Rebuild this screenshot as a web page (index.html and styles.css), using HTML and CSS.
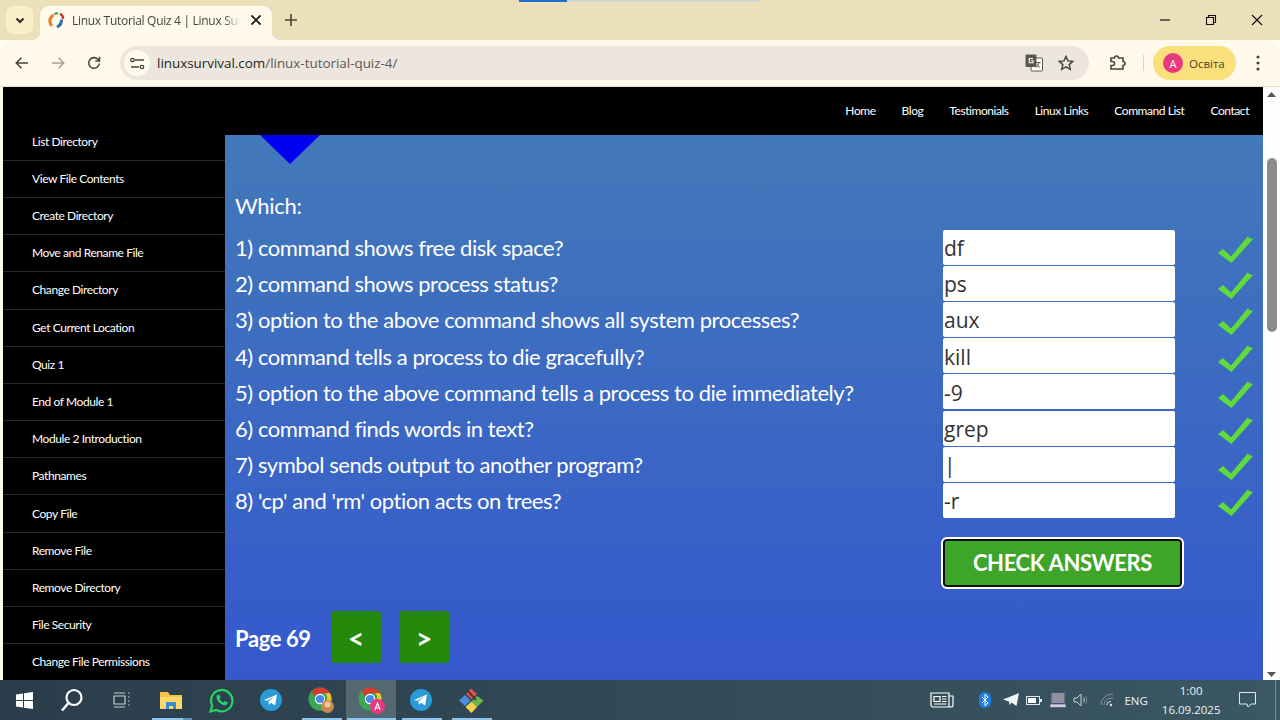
FILE: index.html
```html
<!DOCTYPE html>
<html lang="en">
<head>
<meta charset="utf-8">
<title>Linux Tutorial Quiz 4 | Linux Survival</title>
<link rel="stylesheet" href="styles.css">
</head>
<body>
<div class="tabstrip">
  <div class="load-bar"></div>
  <button class="tab-search"><svg width="12" height="12" viewBox="0 0 12 12"><path d="M2.500 4.500 6 8l3.500-3.500" fill="none" stroke="#2b2a20" stroke-width="2"/></svg></button>
  <div class="tab">
    <svg class="favicon" width="17" height="17" viewBox="0 0 17 17"><path d="M5.500 3C2 5 .5 9 3.500 14" fill="none" stroke="#e8792a" stroke-width="3"/><path d="M6.500 2.500C7.500 1.500 9 1.300 10 1.500" fill="none" stroke="#3aa655" stroke-width="2.400"/><path d="M12 1.800c2 1 3 3 3.200 5" fill="none" stroke="#c4342c" stroke-width="2.400"/><path d="M13.500 7.500c.2 3-1.500 6-4.500 7.500" fill="none" stroke="#2f6fb5" stroke-width="3"/></svg>
    <span class="tab-title">Linux Tutorial Quiz 4 | Linux Survival</span>
    <svg class="tab-close" width="12" height="12" viewBox="0 0 12 12"><path d="M1.500 1.500l9 9m0-9l-9 9" stroke="#222" stroke-width="1.800"/></svg>
  </div>
  <svg class="new-tab" width="14" height="14" viewBox="0 0 14 14"><path d="M7 1v12M1 7h12" stroke="#4a4636" stroke-width="1.600"/></svg>
  <div class="win-controls">
    <svg width="12" height="12" viewBox="0 0 12 12"><path d="M1 6h10" stroke="#111" stroke-width="1.200"/></svg>
    <svg width="12" height="12" viewBox="0 0 12 12"><path d="M1.500 3.500h7v7h-7zM3.500 3.500v-2h7v7h-2" fill="none" stroke="#111" stroke-width="1.100"/></svg>
    <svg width="12" height="12" viewBox="0 0 12 12"><path d="M1 1l10 10m0-10L1 11" stroke="#111" stroke-width="1.200"/></svg>
  </div>
</div>
<div class="toolbar">
  <svg class="nav-icon" width="16" height="16" viewBox="0 0 16 16"><path d="M14 8H2.500M7.500 2.800 2.300 8l5.200 5.200" fill="none" stroke="#4a4636" stroke-width="1.600"/></svg>
  <svg class="nav-icon" width="16" height="16" viewBox="0 0 16 16"><path d="M2 8h11.500M8.500 2.800 13.700 8l-5.200 5.200" fill="none" stroke="#a9a493" stroke-width="1.600"/></svg>
  <svg class="nav-icon" width="16" height="16" viewBox="0 0 16 16"><path d="M13.300 8.500a5.300 5.300 0 1 1-1.500-4.300l1.500 1.500M13.500 1.800v4.200H9.300" fill="none" stroke="#4a4636" stroke-width="1.600"/></svg>
  <div class="omnibox">
    <span class="site-btn"><svg width="15" height="13" viewBox="0 0 15 13"><path d="M5 3h9M1 10h8" stroke="#4a4636" stroke-width="1.400"/><circle cx="2.500" cy="3" r="1.700" fill="none" stroke="#4a4636" stroke-width="1.300"/><circle cx="12" cy="10" r="1.700" fill="none" stroke="#4a4636" stroke-width="1.300"/></svg></span>
    <span class="url"><span class="url-host">linuxsurvival.com</span>/linux-tutorial-quiz-4/</span>
    <svg class="translate" width="18" height="18" viewBox="0 0 18 18"><rect x="6" y="4" width="11.500" height="13" rx="1" fill="#fff" stroke="#5c5848"/><rect x="0.500" y="0.500" width="11" height="12.500" rx="1" fill="#5c5848"/><path d="M8 4.500H4.300v4.300H8V6.700H6" fill="none" stroke="#fff" stroke-width="1.100"/><path d="M11 8.500h4.500M14 8.500c-.3 2-1.300 4-3 5M12 10.500c.6 1.300 1.600 2.400 3 3" fill="none" stroke="#5c5848"/></svg>
    <svg class="star" width="16" height="16" viewBox="0 0 16 16"><path d="M8 1.500l2 4.400 4.800.5-3.600 3.200 1 4.700L8 11.900l-4.200 2.400 1-4.700L1.200 6.400 6 5.900z" fill="none" stroke="#4a4636" stroke-width="1.500"/></svg>
  </div>
  <svg class="ext" width="18" height="18" viewBox="0 0 18 18"><path d="M2 5h3.500a2 2 0 0 1 4 0H14v3.500a2 2 0 0 1 0 4V16H2v-3.500h1.500a2 2 0 0 0 0-4H2z" transform="translate(0 -1)" fill="none" stroke="#4a4636" stroke-width="1.600"/></svg>
  <span class="sep"></span>
  <div class="profile"><span class="avatar">A</span><span>Освіта</span></div>
  <svg class="menu" width="4" height="16" viewBox="0 0 4 16"><circle cx="2" cy="2" r="1.600" fill="#4a4636"/><circle cx="2" cy="8" r="1.600" fill="#4a4636"/><circle cx="2" cy="14" r="1.600" fill="#4a4636"/></svg>
</div>
<div class="viewport">
  <div class="page">
    <header class="site-header">
      <nav class="site-nav">
        <a>Home</a><a>Blog</a><a>Testimonials</a><a>Linux Links</a><a>Command List</a><a>Contact</a>
      </nav>
    </header>
    <div class="page-body">
      <aside class="sidebar">
        <a>List Directory</a><a>View File Contents</a><a>Create Directory</a><a>Move and Rename File</a><a>Change Directory</a><a>Get Current Location</a><a>Quiz 1</a><a>End of Module 1</a><a>Module 2 Introduction</a><a>Pathnames</a><a>Copy File</a><a>Remove File</a><a>Remove Directory</a><a>File Security</a><a>Change File Permissions</a>
      </aside>
      <main class="content">
        <div class="triangle"></div>
        <p class="which">Which:</p>
        <div class="quiz">
          <div class="q-text">1) command shows free disk space?</div><input class="q-input" value="df" readonly><svg class="check" viewBox="0 0 35 28"><path d="M0 18l5-4 8 7.500L30 1l1 2 4 1-21.500 24z" fill="#5fdc3a"/></svg>
          <div class="q-text">2) command shows process status?</div><input class="q-input" value="ps" readonly><svg class="check" viewBox="0 0 35 28"><path d="M0 18l5-4 8 7.500L30 1l1 2 4 1-21.500 24z" fill="#5fdc3a"/></svg>
          <div class="q-text">3) option to the above command shows all system processes?</div><input class="q-input" value="aux" readonly><svg class="check" viewBox="0 0 35 28"><path d="M0 18l5-4 8 7.500L30 1l1 2 4 1-21.500 24z" fill="#5fdc3a"/></svg>
          <div class="q-text">4) command tells a process to die gracefully?</div><input class="q-input" value="kill" readonly><svg class="check" viewBox="0 0 35 28"><path d="M0 18l5-4 8 7.500L30 1l1 2 4 1-21.500 24z" fill="#5fdc3a"/></svg>
          <div class="q-text">5) option to the above command tells a process to die immediately?</div><input class="q-input" value="-9" readonly><svg class="check" viewBox="0 0 35 28"><path d="M0 18l5-4 8 7.500L30 1l1 2 4 1-21.500 24z" fill="#5fdc3a"/></svg>
          <div class="q-text">6) command finds words in text?</div><input class="q-input" value="grep" readonly><svg class="check" viewBox="0 0 35 28"><path d="M0 18l5-4 8 7.500L30 1l1 2 4 1-21.500 24z" fill="#5fdc3a"/></svg>
          <div class="q-text">7) symbol sends output to another program?</div><input class="q-input" value="|" readonly><svg class="check" viewBox="0 0 35 28"><path d="M0 18l5-4 8 7.500L30 1l1 2 4 1-21.500 24z" fill="#5fdc3a"/></svg>
          <div class="q-text">8) 'cp' and 'rm' option acts on trees?</div><input class="q-input" value="-r" readonly><svg class="check" viewBox="0 0 35 28"><path d="M0 18l5-4 8 7.500L30 1l1 2 4 1-21.500 24z" fill="#5fdc3a"/></svg>
        </div>
        <div class="actions"><button class="check-btn">CHECK ANSWERS</button></div>
        <div class="pager">
          <span class="page-label">Page 69</span>
          <button class="page-btn">&lt;</button>
          <button class="page-btn">&gt;</button>
        </div>
      </main>
    </div>
  </div>
  <div class="scrollbar">
    <svg width="9" height="5" viewBox="0 0 9 5"><path d="M0 5l4.500-5L9 5z" fill="#555"/></svg>
    <div class="thumb-track"><div class="thumb"></div></div>
    <svg width="9" height="5" viewBox="0 0 9 5"><path d="M0 0l4.500 5L9 0z" fill="#555"/></svg>
  </div>
</div>
<footer class="taskbar">
  <div class="tb-left">
    <span class="tb-btn tb-start"><svg width="17" height="17" viewBox="0 0 17 17"><path d="M0 2.500l7-1v6.600H0zM8 1.300 17 0v8.100H8zM0 9h7v6.600l-7-1zM8 9h9v8l-9-1.300z" fill="#fff"/></svg></span>
    <span class="tb-btn tb-search"><svg width="24" height="24" viewBox="0 0 24 24"><circle cx="14" cy="9.500" r="7.500" fill="none" stroke="#fff" stroke-width="2.200"/><path d="M8.500 15 2 22.500" stroke="#fff" stroke-width="2.600"/></svg></span>
    <span class="tb-btn tb-tasks"><svg width="17" height="16" viewBox="0 0 17 16"><path d="M1 1h11M1 15h11M1 4h11v8H1zM15 1h1.500M15 5h1.500M15 9h1.500M15 13h1.500" fill="none" stroke="#c8d0d4" stroke-width="1.200"/></svg></span>
    <span class="tb-btn tb-app running stacked"><svg width="22" height="20" viewBox="0 0 22 20"><path d="M0 2h8l2 3h12v14H0z" fill="#f5c342"/><path d="M0 7h22v12H0z" fill="#fbd968"/><path d="M6 12h10v7h-3v-3H9v3H6z" fill="#2e8fd6"/></svg></span>
    <span class="tb-btn tb-app"><svg width="25" height="25" viewBox="0 0 25 25"><path d="M1.500 23.500l1.700-6A10.700 10.700 0 1 1 7.500 22z" fill="none" stroke="#27d366" stroke-width="2.200"/><path d="M8.700 6.800c-1 1-1.500 2.200-1 3.700 1 3 3.500 5.500 6.700 6.600 1.600.5 2.900 0 3.800-1.200l.5-1.400-3-1.500-1.300 1.400c-1.700-.7-3-2-3.800-3.700l1.100-1.200L10.300 6.800z" fill="#27d366"/></svg></span>
    <span class="tb-btn tb-app"><svg width="22" height="22" viewBox="0 0 22 22"><circle cx="11" cy="11" r="11" fill="#2a9bd8"/><path d="M4 11 17 5.500 15 16.500l-4-2.800-2 2-.5-3.500 6-5-7.500 4.500z" fill="#fff"/></svg></span>
    <span class="tb-btn tb-app running"><svg width="27" height="27" viewBox="0 0 27 27"><circle cx="12" cy="12" r="11.500" fill="#3aa655"/><path d="M12 .5a11.500 11.500 0 0 1 10 5.800H12a5.700 5.700 0 0 0-5.200 3.200L3.800 4.200A11.500 11.500 0 0 1 12 .5z" fill="#d9392e"/><path d="M22 6.300a11.500 11.500 0 0 1-9 17.100l4-8a5.700 5.700 0 0 0 0-9.100z" fill="#f7c626"/><circle cx="12" cy="12" r="5.200" fill="#fff"/><circle cx="12" cy="12" r="4" fill="#4a8ae6"/><circle cx="19.500" cy="19.500" r="6.500" fill="#c98a4e"/><circle cx="19.500" cy="17.500" r="3" fill="#f0c9a0"/></svg></span>
    <span class="tb-btn tb-app active running"><svg width="27" height="27" viewBox="0 0 27 27"><circle cx="12" cy="12" r="11.500" fill="#3aa655"/><path d="M12 .5a11.500 11.500 0 0 1 10 5.800H12a5.700 5.700 0 0 0-5.200 3.200L3.800 4.200A11.500 11.500 0 0 1 12 .5z" fill="#d9392e"/><path d="M22 6.300a11.500 11.500 0 0 1-9 17.100l4-8a5.700 5.700 0 0 0 0-9.100z" fill="#f7c626"/><circle cx="12" cy="12" r="5.200" fill="#fff"/><circle cx="12" cy="12" r="4" fill="#4a8ae6"/><circle cx="19.500" cy="19.500" r="7.500" fill="#e8387f"/><path d="M16.800 23l2.700-7 2.700 7M17.800 21h3.400" fill="none" stroke="#fff" stroke-width="1.100"/></svg></span>
    <span class="tb-btn tb-app running"><svg width="22" height="22" viewBox="0 0 22 22"><circle cx="11" cy="11" r="11" fill="#2a9bd8"/><path d="M4 11 17 5.500 15 16.500l-4-2.800-2 2-.5-3.500 6-5-7.500 4.500z" fill="#fff"/></svg></span>
    <span class="tb-btn tb-app running"><svg width="25" height="25" viewBox="0 0 25 25"><path d="M0 12.500 6 7l5.500 5.500L6 18z" fill="#4a90e2"/><path d="M12.500 13.500 18 8l6.500 4.500L18 19z" fill="#6bb84a"/><path d="M6.500 19l6-5.500L18 19l-5.500 6z" fill="#f2d14c"/><path d="M7 6l5-5.500L18 6l-5.500 5.500z" fill="#d9534f"/><path d="M9 3l8 9" stroke="#3c2a2a" stroke-width="1.600"/></svg></span>
  </div>
  <div class="tb-tray">
    <svg class="news" width="24" height="16" viewBox="0 0 24 16"><path d="M1 1h18v14H3a2 2 0 0 1-2-2zM19 4h4v9a2 2 0 0 1-2 2h-2M4 4.500h6v5H4zM12 4.500h4.500M12 7h4.500M12 9.500h4.500M4 12h12.500" fill="none" stroke="#fff" stroke-width="1.200"/></svg>
    <svg class="bt" width="12" height="16" viewBox="0 0 12 16"><rect width="12" height="16" rx="6" fill="#1e7fe6"/><path d="M3 5l6 6-3 2.700V2.300L9 5l-6 6" fill="none" stroke="#fff"/></svg>
    <svg class="tg" width="16" height="14" viewBox="0 0 16 14"><path d="M0 6.500 16 0l-2.500 13-5-3.500-2 2.500L6 8.500z" fill="#f2f4f4"/></svg>
    <svg class="batt" width="16" height="9" viewBox="0 0 16 9"><rect x="0.500" y="0.500" width="13" height="8" fill="none" stroke="#dfe4e6"/><rect x="2" y="2" width="8" height="5" fill="#fff"/><rect x="14" y="3" width="2" height="3" fill="#dfe4e6"/></svg>
    <svg class="laptop" width="16" height="16" viewBox="0 0 16 16"><rect x="1" y="0.500" width="14" height="11" fill="#8e929c" stroke="#504a86"/><path d="M0 12h16v3.500H0z" fill="#cfd2d6" stroke="#504a86" stroke-width=".7"/></svg>
    <svg class="vol" width="15" height="14" viewBox="0 0 15 14"><path d="M1 5h3l4-4v12L4 9H1zM10.500 4.500c1 1.500 1 3.500 0 5" fill="none" stroke="#c8d0d4"/><path d="M12.500 3c1.500 2 1.500 6 0 8" fill="none" stroke="#71858d"/></svg>
    <svg class="wifi" width="14" height="14" viewBox="0 0 14 14"><path d="M1 12C1 6 6 1 13 1M4 12c0-4 3.500-7 9-7" fill="none" stroke="#8b9ba2"/><path d="M7 12c0-2 2-3.500 4-3.500" fill="none" stroke="#c8d0d4" stroke-width="1.200"/><circle cx="11" cy="12" r="1.200" fill="#dfe4e6"/></svg>
    <span class="lang">ENG</span>
    <div class="clock"><span>1:00</span><span>16.09.2025</span></div>
    <svg class="notif" width="17" height="16" viewBox="0 0 17 16"><path d="M.5 .5h16v11.500h-4.500L9 15l-1-3H.5z" fill="none" stroke="#e4e9ea"/></svg>
    <span class="show-desktop"></span>
  </div>
</footer>
</body>
</html>
```
FILE: styles.css
```css
* { box-sizing: border-box; }
html, body { margin: 0; height: 100%; overflow: hidden; }
body { width: 1280px; height: 720px; display: flex; flex-direction: column; font-family: "Open Sans", "Noto Sans", sans-serif; position: relative; }
svg { display: block; flex: none; }
button { font-family: inherit; border: 0; padding: 0; }

.tabstrip { height: 40px; background: #ebe0b9; display: flex; align-items: flex-end; padding-left: 6px; flex: none; }
.load-bar { position: absolute; left: 519px; top: 0; width: 241px; height: 2px; background: linear-gradient(to right, #1a73c9 48px, #cfd3d2 48px); }
.tab-search { width: 27px; height: 28px; background: #faf0c8; border-radius: 8px; margin: 0 7px 6px 0; display: flex; align-items: center; justify-content: center; }
.tab { width: 232px; height: 34px; background: #fffaeb; border-radius: 9px 9px 0 0; display: flex; align-items: center; padding: 0 10px 6px 8px; margin-right: 10px; position: relative; }
.tab::before, .tab::after { content: ""; position: absolute; bottom: 0; width: 8px; height: 8px; }
.tab::before { left: -8px; background: radial-gradient(circle at 0 0, transparent 8px, #fffaeb 8.500px); }
.tab::after { right: -8px; background: radial-gradient(circle at 100% 0, transparent 8px, #fffaeb 8.500px); }
.favicon { margin-right: 7px; }
.tab-title { font-size: 12px; letter-spacing: -.3px; color: #46433a; white-space: nowrap; overflow: hidden; width: 168px; flex: none; margin-right: 10px; -webkit-mask-image: linear-gradient(to right, #000 152px, transparent 168px); }
.new-tab { margin: 0 0 13px 2px; }
.win-controls { margin-left: auto; display: flex; gap: 34px; padding: 0 17px 14px 0; }

.toolbar { height: 47px; background: #fffaeb; display: flex; align-items: center; padding: 0 14px; flex: none; border-radius: 8px 8px 0 0; border-bottom: 1px solid #e6dfc8; }
.nav-icon { margin-right: 20px; }
.nav-icon:nth-child(3) { margin-right: 18px; }
.omnibox { width: 969px; height: 34px; background: #ece6de; border-radius: 17px; display: flex; align-items: center; padding: 0 15px 0 4px; flex: none; }
.site-btn { width: 26px; height: 26px; border-radius: 50%; background: #fffaeb; display: flex; align-items: center; justify-content: center; }
.url { font-size: 13.400px; color: #5e5a4e; margin-left: 7px; }
.url-host { color: #26241c; }
.translate { margin-left: auto; }
.star { margin-left: 15px; }
.ext { margin-left: 20px; }
.sep { width: 1px; height: 16px; background: #f5d76e; margin: 0 9px 0 16px; }
.profile { width: 83px; height: 34px; background: #fbdf7b; border-radius: 17px; display: flex; align-items: center; gap: 6px; padding-left: 10px; font-size: 11.500px; color: #4a4530; }
.avatar { width: 20px; height: 20px; border-radius: 50%; background: #e8387f; color: #fff; display: flex; align-items: center; justify-content: center; font-size: 11px; }
.menu { margin-left: 20px; }

.viewport { flex: 1; min-height: 0; display: flex; overflow: hidden; }
.page { flex: 1; min-width: 0; background: #fffaeb; padding-left: 3px; display: flex; flex-direction: column; font-family: Lato, sans-serif; overflow: hidden; }
.site-header { height: 48px; background: #000; flex: none; display: flex; justify-content: flex-end; align-items: center; position: relative; z-index: 1; }
.site-nav { display: flex; gap: 26px; padding: 0 14px 2px 0; }
.site-nav a { color: #fff; font-size: 12px; letter-spacing: -.44px; }
.page-body { flex: 1; min-height: 0; display: flex; overflow: hidden; }
.sidebar { width: 222px; background: #000; flex: none; margin-top: -11.400px; }
.sidebar a { display: flex; align-items: center; height: 37.2px; padding: 0 0 1px 29px; color: #fff; font-size: 12px; letter-spacing: -.42px; border-bottom: 1px solid #2a2a2a; }
.content { flex: 1; min-width: 0; background: linear-gradient(to bottom, #4279b9, #3558cd); padding: 0 0 0 10px; color: #fff; }
.triangle { width: 0; height: 0; border-left: 30px solid transparent; border-right: 30px solid transparent; border-top: 29px solid #0000f0; margin-left: 25px; }
.which { margin: 28px 0 0; font-size: 22px; line-height: 28px; letter-spacing: -.3px; }
.quiz { display: grid; grid-template-columns: 708px 232px 1fr; grid-auto-rows: 36.2px; margin-top: 10px; align-items: center; }
.q-text { font-size: 22px; line-height: 28px; white-space: nowrap; letter-spacing: -.45px; }
.q-input { width: 232px; height: 35px; margin-bottom: 2px; border: 0; border-radius: 2px; background: #fff; color: #333; font-family: "Open Sans", sans-serif; font-size: 21px; padding: 2px 1px 0; outline: none; }
.check { width: 35px; height: 28px; margin: 2px 0 0 43px; }
.actions { margin: 19px 0 0 708px; }
.check-btn { width: 239px; height: 48px; background: #3fa52a; border: 2px solid #111; outline: 2px solid #fff; border-radius: 4px; color: #fff; font-family: Lato, sans-serif; font-weight: 700; font-size: 22px; letter-spacing: -.4px; }
.pager { display: flex; align-items: center; margin-top: 24px; }
.page-label { font-size: 22px; font-weight: 700; width: 96px; letter-spacing: -.4px; padding-top: 3px; }
.page-btn { width: 50px; height: 52px; padding-top: 2px; background: #258a0c; border-radius: 3px; color: #fff; font-family: Lato, sans-serif; font-weight: 700; font-size: 28px; margin-right: 18px; }

.scrollbar { width: 17px; flex: none; background: #fefefe; display: flex; flex-direction: column; align-items: center; justify-content: space-between; padding: 5px 0 3px; }
.thumb-track { flex: 1; width: 100%; padding: 61px 3px 0 4px; }
.thumb { height: 174px; background: #8c8c8c; border-radius: 5px; }

.taskbar { height: 40px; flex: none; background: linear-gradient(to right, #2a3d4a, #3a5762); display: flex; justify-content: space-between; color: #eef2f3; }
.tb-left { display: flex; }
.tb-btn { height: 40px; display: flex; align-items: center; justify-content: center; position: relative; }
.tb-start { width: 48px; }
.tb-search { width: 48px; }
.tb-tasks { width: 50px; }
.tb-app { width: 50px; }
.tb-app.active { background: #54686f; }
.tb-app.running::after { content: ""; position: absolute; left: 6px; right: 4px; bottom: 0; height: 2px; background: #8cc6ec; }
.tb-app.active.running::after { left: 1px; right: 0; }
.tb-app.stacked::after { background: linear-gradient(to right, #8cc6ec 31px, #5e93b5 31px); }
.tb-tray { display: flex; align-items: center; padding-right: 0; }
.news { margin-right: 25px; }
.bt { margin-right: 11.500px; }
.tg { margin-right: 7.500px; }
.batt { margin-right: 8px; }
.laptop { margin-right: 6.500px; }
.vol { margin-right: 12.500px; }
.wifi { margin-right: 10px; }
.lang { font-size: 11.500px; margin-right: 14px; }
.clock { display: flex; flex-direction: column; align-items: center; font-size: 11.500px; line-height: 19px; margin-right: 18px; }
.show-desktop { width: 5px; height: 40px; margin-left: 19.500px; border-left: 1px solid #7b8f97; }
```
